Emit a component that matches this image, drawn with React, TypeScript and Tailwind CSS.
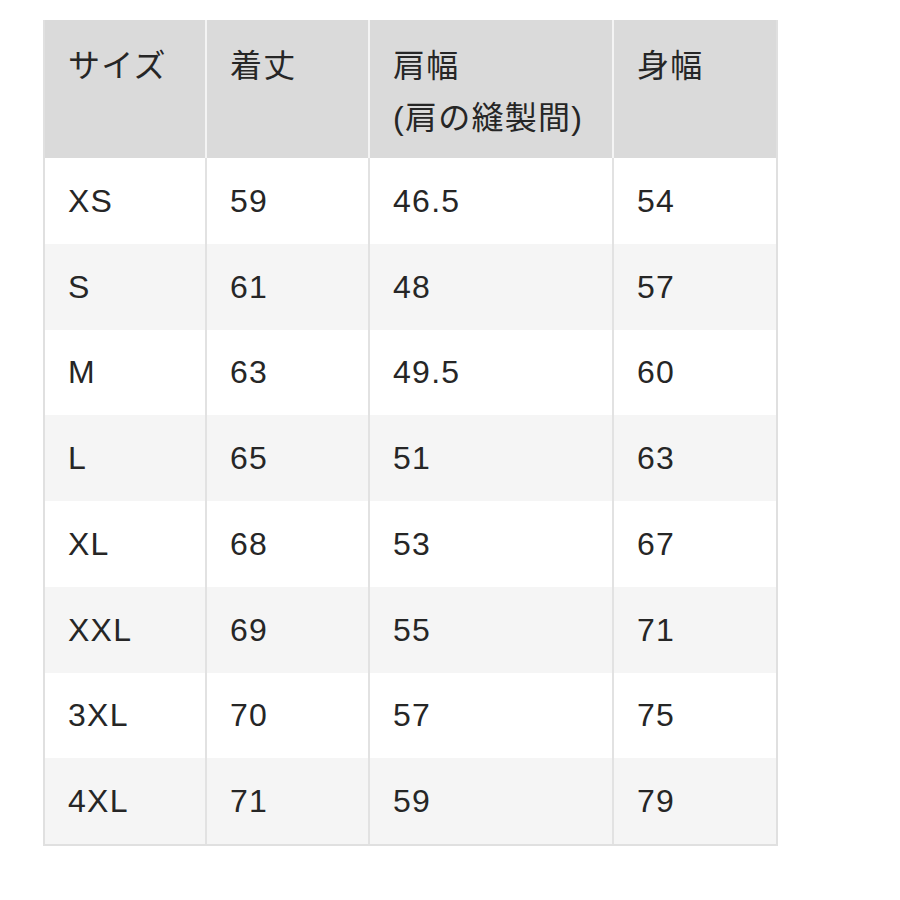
const headers = ['サイズ', '着丈', '肩幅\n(肩の縫製間)', '身幅'];

const rows = [
  ['XS', '59', '46.5', '54'],
  ['S', '61', '48', '57'],
  ['M', '63', '49.5', '60'],
  ['L', '65', '51', '63'],
  ['XL', '68', '53', '67'],
  ['XXL', '69', '55', '71'],
  ['3XL', '70', '57', '75'],
  ['4XL', '71', '59', '79'],
];

export default function App() {
  return (
    <div
      className="min-h-[900px] w-[900px] bg-white pt-[20px] pl-[43px] text-[#262626]"
      style={{ fontFamily: '"Liberation Sans", "Noto Sans CJK JP", sans-serif' }}
    >
      <div className="w-[735px] border-x-2 border-b-2 border-[#e0e0e0]">
        {/* header */}
        <div className="grid h-[138px] grid-cols-[162px_163px_244px_162px] bg-[#dadada]">
          {headers.map((h, i) => (
            <div
              key={i}
              className={`whitespace-pre-line pt-[20px] pl-[23px] text-[32px] leading-[52px] tracking-[0.04em] ${i < 3 ? 'border-r-2 border-[#f4f4f4]' : ''}`}
            >
              {h}
            </div>
          ))}
        </div>

        {/* body */}
        {rows.map((r, ri) => (
          <div
            key={r[0]}
            className={`grid h-[85.75px] grid-cols-[162px_163px_244px_162px] ${ri % 2 === 1 ? 'bg-[#f5f5f5]' : 'bg-white'}`}
          >
            {r.map((c, ci) => (
              <div
                key={ci}
                className={`flex items-center pl-[23px] text-[32px] tracking-[0.04em] ${ci < 3 ? 'border-r-2 border-[#e2e2e2]' : ''}`}
              >
                {c}
              </div>
            ))}
          </div>
        ))}
      </div>
    </div>
  );
}
